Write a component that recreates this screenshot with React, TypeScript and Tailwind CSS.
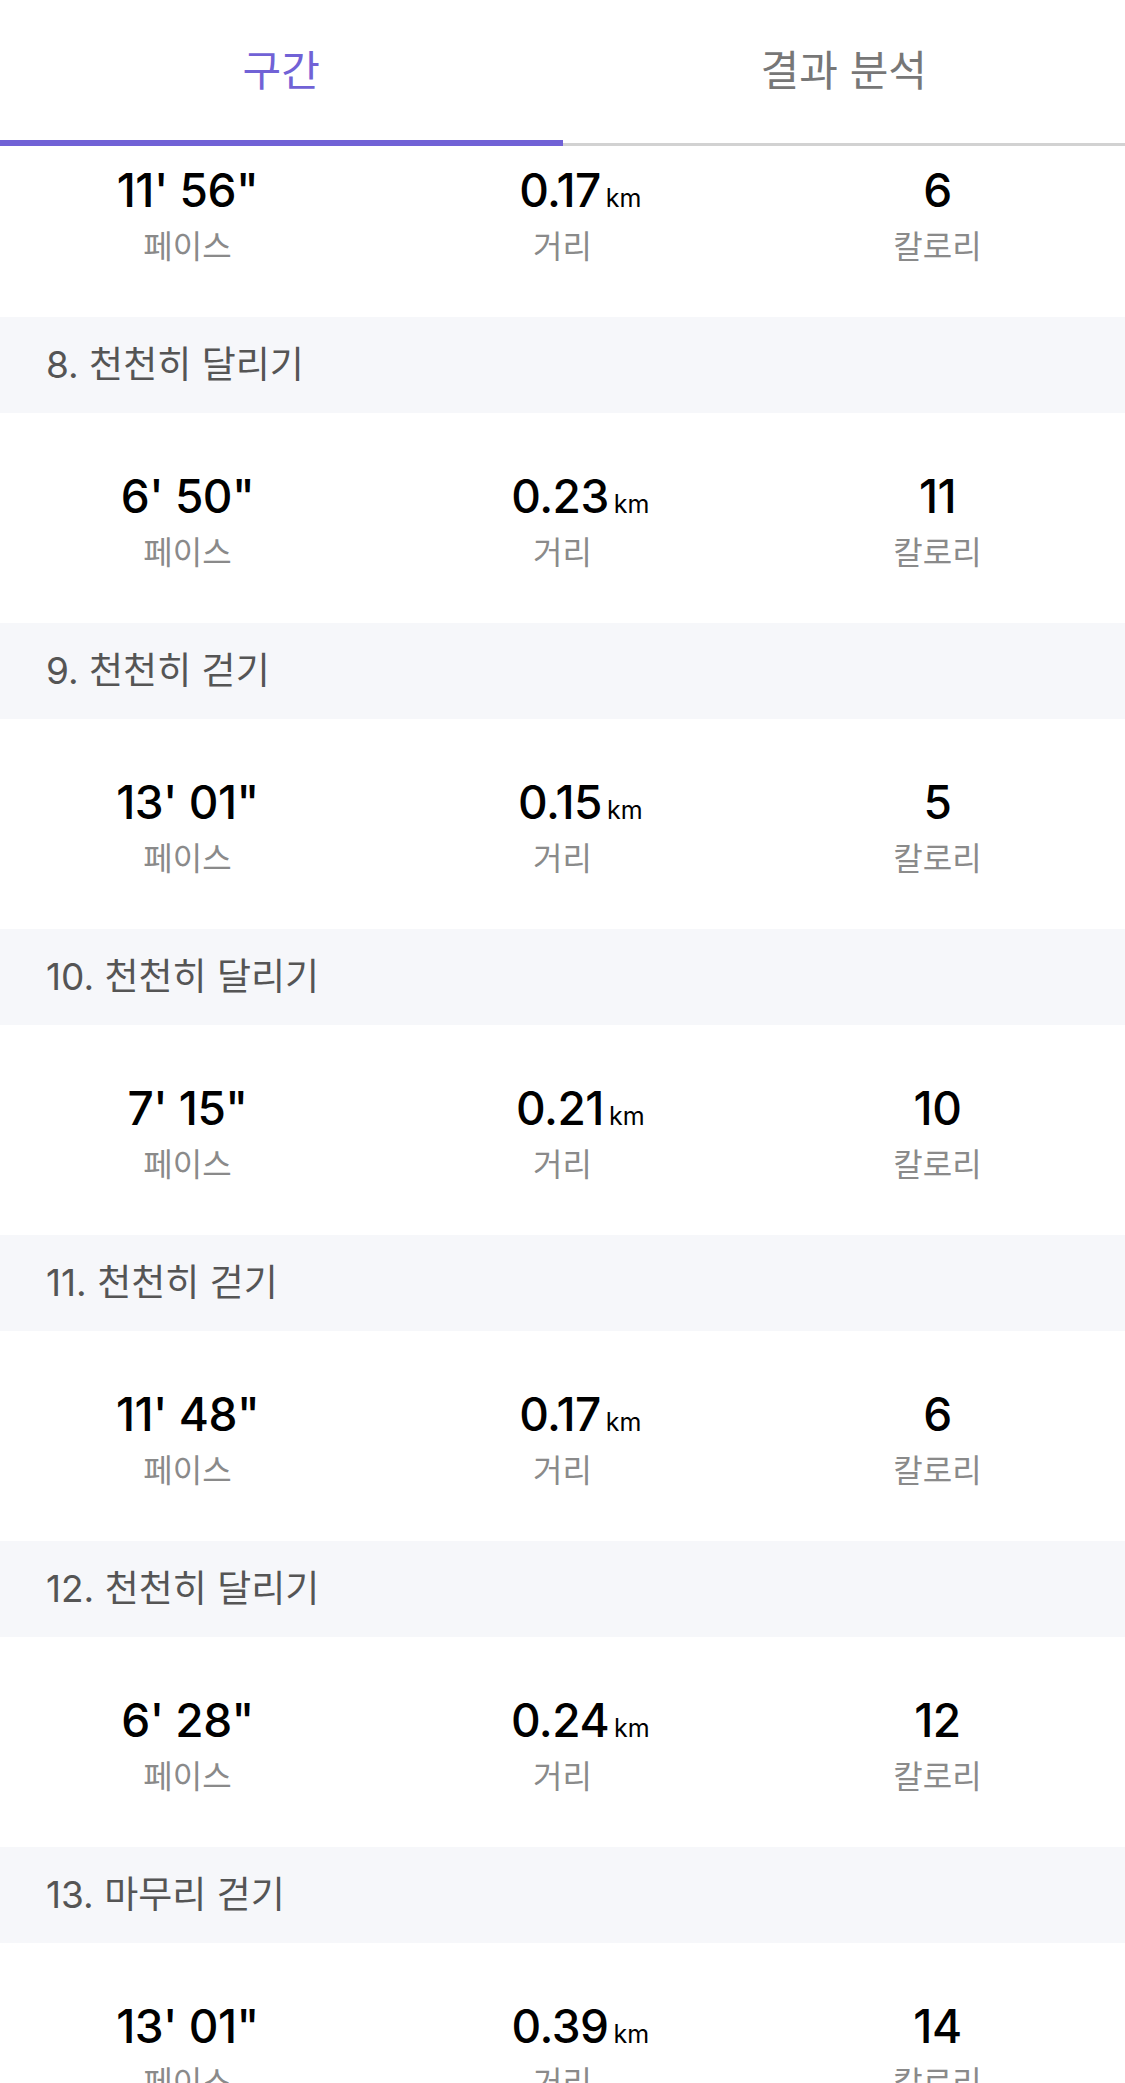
import { Fragment } from 'react';

type Split = { title?: string; pace: string; dist: string; kcal: string };

const splits: Split[] = [
  { pace: `11' 56"`, dist: '0.17', kcal: '6' },
  { title: '8. 천천히 달리기', pace: `6' 50"`, dist: '0.23', kcal: '11' },
  { title: '9. 천천히 걷기', pace: `13' 01"`, dist: '0.15', kcal: '5' },
  { title: '10. 천천히 달리기', pace: `7' 15"`, dist: '0.21', kcal: '10' },
  { title: '11. 천천히 걷기', pace: `11' 48"`, dist: '0.17', kcal: '6' },
  { title: '12. 천천히 달리기', pace: `6' 28"`, dist: '0.24', kcal: '12' },
  { title: '13. 마무리 걷기', pace: `13' 01"`, dist: '0.39', kcal: '14' },
];

const font = { fontFamily: 'Inter, "Noto Sans CJK KR", sans-serif' };

function Stat({ value, label, unit }: { value: string; label: string; unit?: string }) {
  return (
    <div className="flex flex-col items-center">
      <div className="flex items-baseline h-[46px]">
        <span className="text-[46px] leading-[46px] font-medium text-black tracking-[-0.5px]">{value}</span>
        {unit && (
          <span className="inline-block w-0 whitespace-nowrap pl-[5px] text-[25px] leading-none text-black">{unit}</span>
        )}
      </div>
      <span className="mt-[14px] text-[32px] leading-[40px] text-[#8a8a8a]">{label}</span>
    </div>
  );
}

export default function App() {
  return (
    <div className="w-[1125px] h-[2083px] overflow-hidden bg-white flex flex-col" style={font}>
      <div className="flex flex-col shrink-0">
        <div className="flex h-[140px]">
          <div className="flex-1 flex items-center justify-center text-[42px] text-[#7162d6]">구간</div>
          <div className="flex-1 flex items-center justify-center text-[42px] text-[#777777]">결과 분석</div>
        </div>
        <div className="flex h-[6px] items-end">
          <div className="w-1/2 h-[6px] bg-[#7162d6]" />
          <div className="w-1/2 h-[3px] bg-[#d2d2d2]" />
        </div>
      </div>

      <div className="flex-1 overflow-hidden">
        <div className="-mt-[39px] flex flex-col">
          {splits.map((s, i) => (
            <Fragment key={i}>
              {s.title && (
                <div className="h-[96px] bg-[#f6f7fa] flex items-center pl-[46px] text-[37px] text-[#555555]">
                  {s.title}
                </div>
              )}
              <div className="h-[210px] grid grid-cols-3 pt-[60px]">
                <Stat value={s.pace} label="페이스" />
                <Stat value={s.dist} unit="km" label="거리" />
                <Stat value={s.kcal} label="칼로리" />
              </div>
            </Fragment>
          ))}
        </div>
      </div>
    </div>
  );
}
